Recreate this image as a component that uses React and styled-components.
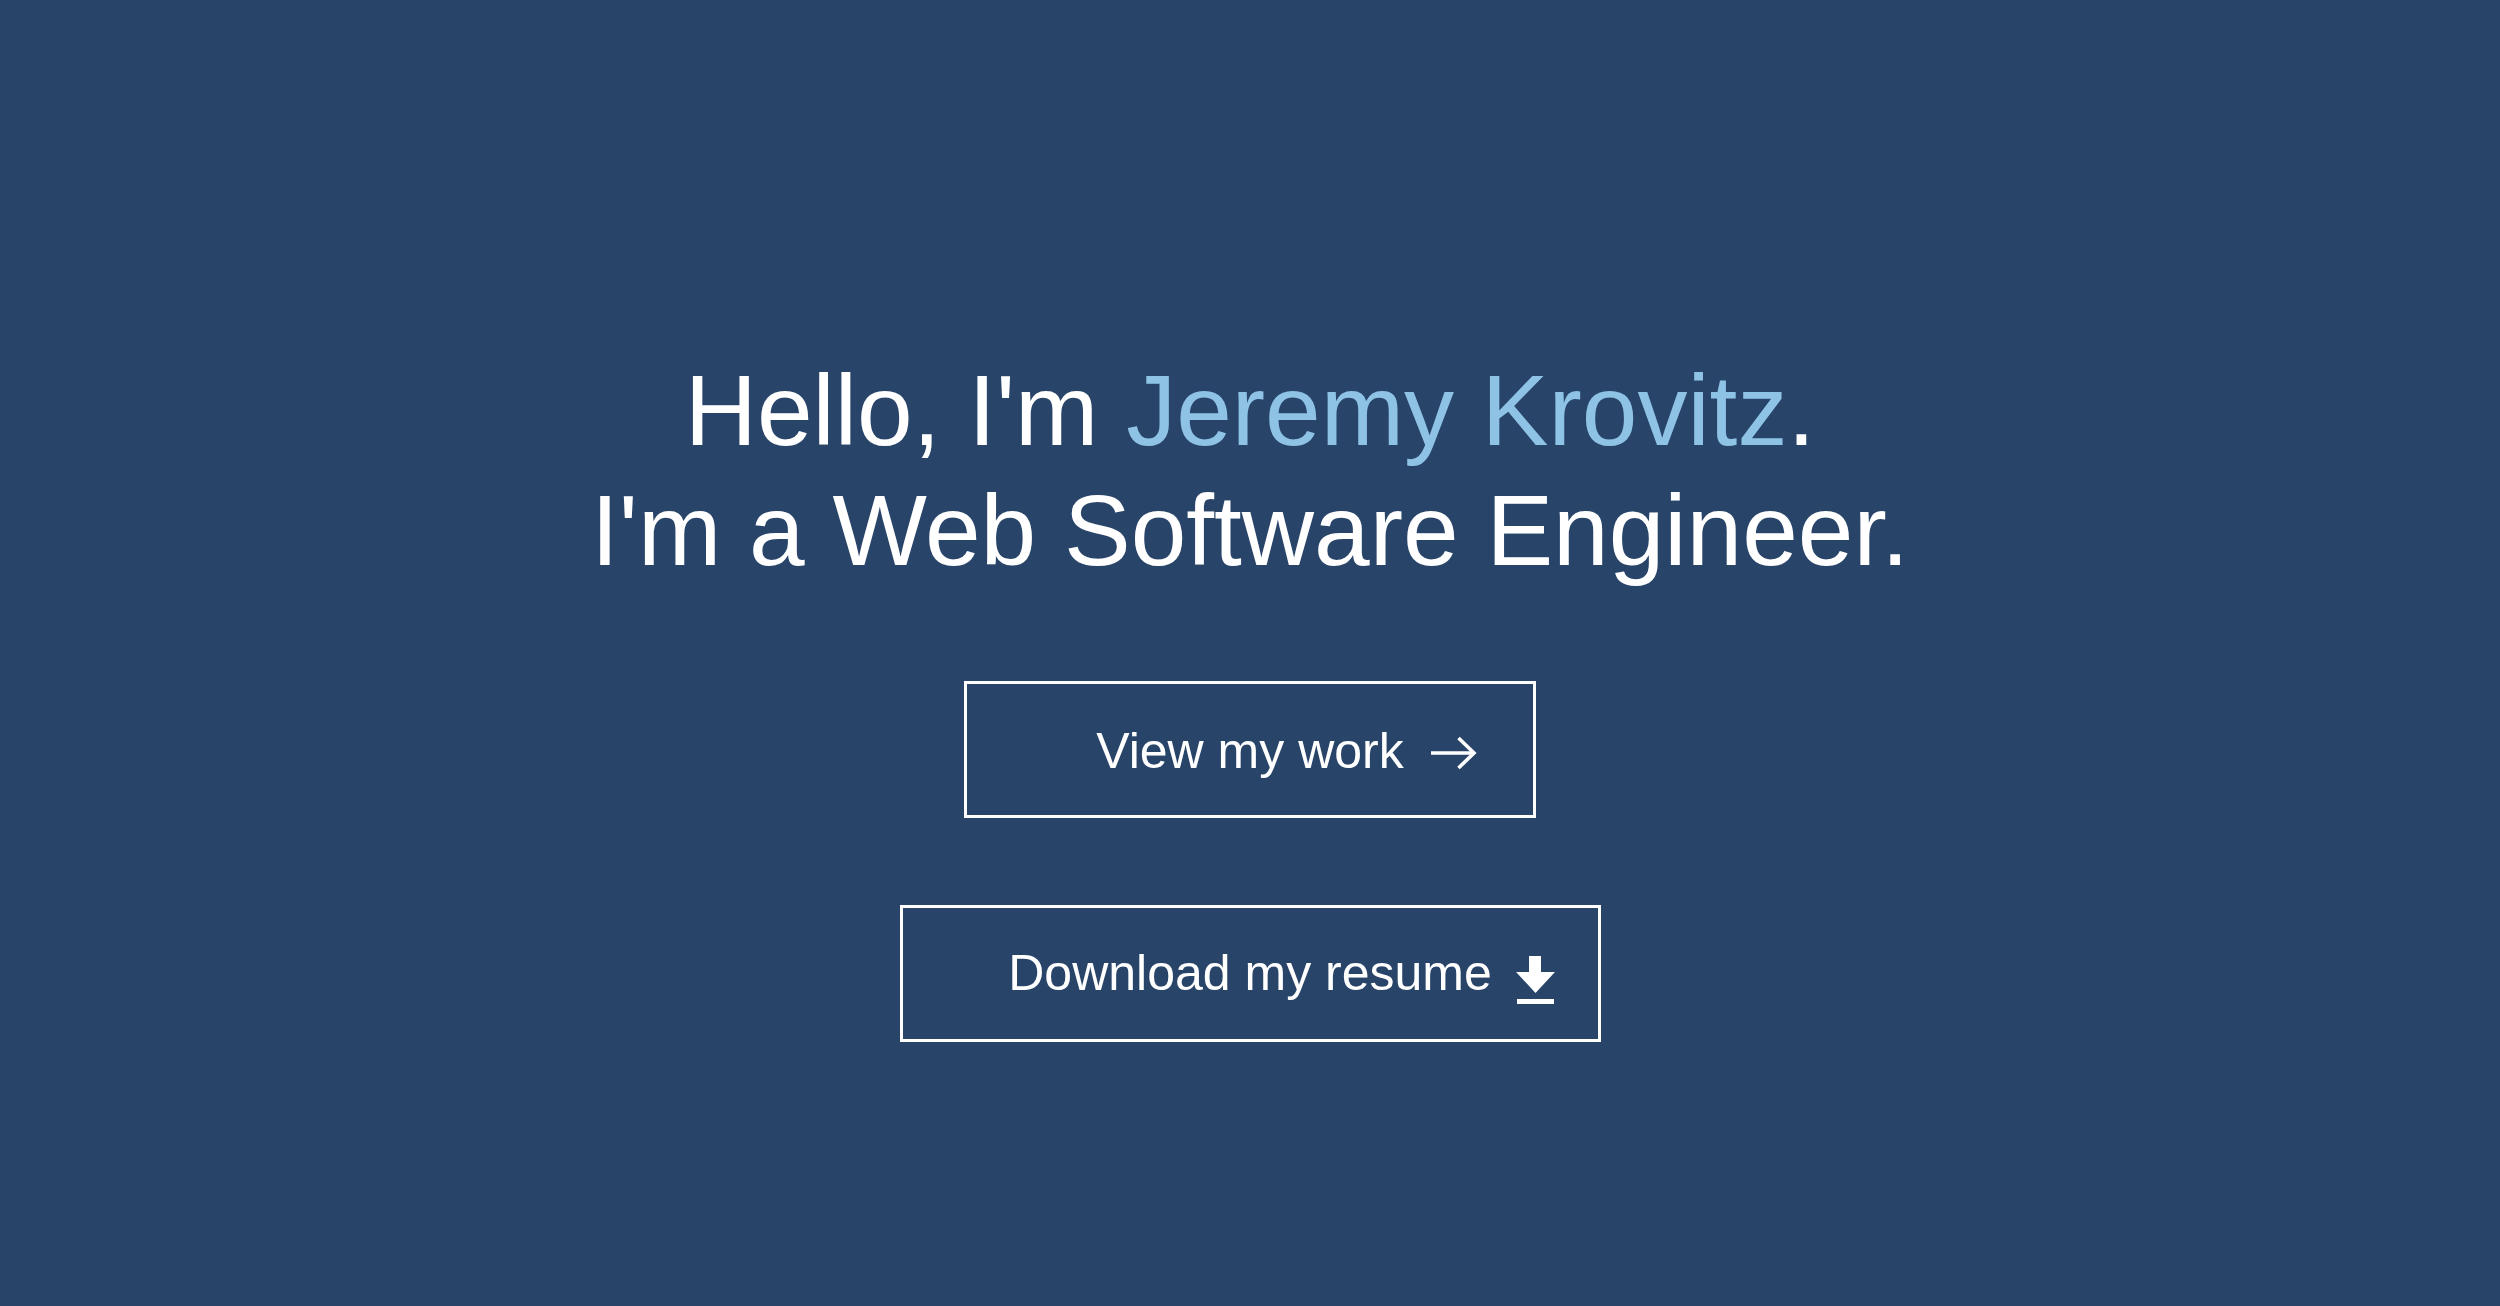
import React from "react";
import styled, { createGlobalStyle } from "styled-components";

const GlobalStyle = createGlobalStyle`
  html, body {
    margin: 0;
    padding: 0;
    background: #284469;
  }
  body {
    font-family: "Liberation Sans", Helvetica, Arial, sans-serif;
    color: #ffffff;
  }
`;

const Page = styled.main`
  min-height: 1306px;
  box-sizing: border-box;
  padding-top: 350px;
  display: flex;
  flex-direction: column;
  align-items: center;
  background: #284469;
`;

const Heading = styled.h1`
  margin: 0;
  font-size: 100px;
  line-height: 120px;
  font-weight: 400;
  text-align: center;
  color: #ffffff;
`;

const Name = styled.span`
  color: #8ec3e6;
`;

const Actions = styled.div`
  margin-top: 91px;
  display: flex;
  flex-direction: column;
  align-items: center;
  gap: 87px;
`;

const Button = styled.a`
  box-sizing: border-box;
  width: ${(p) => p.$width}px;
  height: 137px;
  border: 3px solid #ffffff;
  display: flex;
  align-items: center;
  justify-content: center;
  gap: ${(p) => p.$gap}px;
  padding-left: ${(p) => p.$offset}px;
  padding-top: ${(p) => p.$nudge || 0}px;
  color: #ffffff;
  text-decoration: none;
  font-size: 50px;
  line-height: 1.15;
  cursor: pointer;
`;

const Label = styled.span`
  white-space: nowrap;
`;

const Icon = styled.svg`
  flex: none;
  display: block;
  margin-top: ${(p) => p.$drop || 0}px;
`;

const ArrowIcon = () => (
  <Icon width="47" height="34" viewBox="0 0 47 34" fill="none" $drop={2}>
    <path d="M1 17 H44" stroke="#fff" strokeWidth="3.6" />
    <path d="M28.5 2 L44 17 L28.5 32" stroke="#fff" strokeWidth="3.6" strokeLinejoin="miter" />
  </Icon>
);

const DownloadIcon = () => (
  <Icon width="39" height="48" viewBox="0 0 39 48" fill="#fff" $drop={12}>
    <rect x="13" y="0" width="12" height="17" />
    <polygon points="0,16 39,16 19.5,37" />
    <rect x="1" y="43" width="37" height="5" />
  </Icon>
);

export default function App() {
  return (
    <>
      <GlobalStyle />
      <Page>
        <Heading>
          Hello, I'm <Name>Jeremy Krovitz</Name>.
          <br />
          I'm a Web Software Engineer.
        </Heading>
        <Actions>
          <Button $width={572} $gap={26} $offset={73} $nudge={4}>
            <Label>View my work</Label>
            <ArrowIcon />
          </Button>
          <Button $width={701} $gap={24} $offset={63}>
            <Label>Download my resume</Label>
            <DownloadIcon />
          </Button>
        </Actions>
      </Page>
    </>
  );
}
